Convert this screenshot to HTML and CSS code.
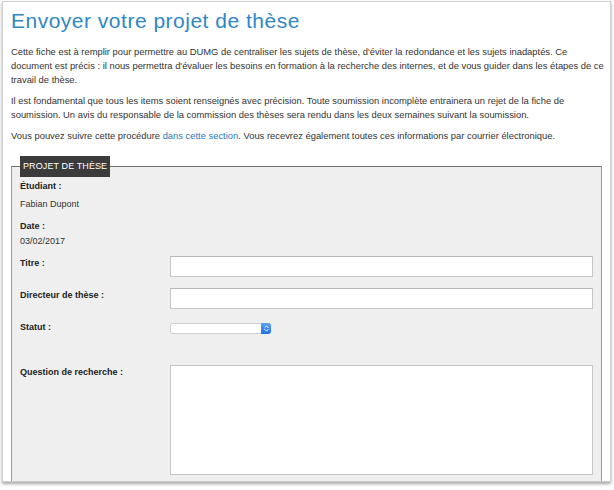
FILE: index.html
```html
<!DOCTYPE html>
<html lang="fr">
<head>
<meta charset="utf-8">
<title>Envoyer votre projet de thèse</title>
<link rel="stylesheet" href="styles.css">
</head>
<body>
<div class="window">
  <div class="page">
    <h1 class="title">Envoyer votre projet de thèse</h1>
    <div class="intro-block">
      <p class="intro">Cette fiche est à remplir pour permettre au DUMG de centraliser les sujets de thèse, d'éviter la redondance et les sujets inadaptés. Ce document est précis : il nous permettra d'évaluer les besoins en formation à la recherche des internes, et de vous guider dans les étapes de ce travail de thèse.</p>
      <p class="intro">Il est fondamental que tous les items soient renseignés avec précision. Toute soumission incomplète entrainera un rejet de la fiche de soumission. Un avis du responsable de la commission des thèses sera rendu dans les deux semaines suivant la soumission.</p>
      <p class="intro">Vous pouvez suivre cette procédure <a class="link" href="#">dans cette section</a>. Vous recevrez également toutes ces informations par courrier électronique.</p>
    </div>

    <fieldset class="box">
      <legend class="legend">PROJET DE THÈSE</legend>
      <div class="info">
        <div class="info-label">Étudiant :</div>
        <div class="info-value">Fabian Dupont</div>
      </div>
      <div class="info info-date">
        <div class="info-label">Date :</div>
        <div class="info-value info-value-tight">03/02/2017</div>
      </div>
      <div class="row">
        <label class="row-label">Titre :</label>
        <input class="text-input" type="text">
      </div>
      <div class="row">
        <label class="row-label">Directeur de thèse :</label>
        <input class="text-input" type="text">
      </div>
      <div class="row row-select">
        <label class="row-label">Statut :</label>
        <span class="select-wrap">
          <select class="select"><option></option></select>
          <span class="select-btn">
            <svg width="8" height="10" viewBox="0 0 8 10"><path d="M2 4 L4 2 L6 4 M2 6 L4 8 L6 6" fill="none" stroke="#fff" stroke-width="1.1" stroke-linecap="round" stroke-linejoin="round"/></svg>
          </span>
        </span>
      </div>
      <div class="row">
        <label class="row-label">Question de recherche :</label>
        <textarea class="textarea"></textarea>
      </div>
    </fieldset>
  </div>
</div>
</body>
</html>
```

FILE: styles.css
```css
html, body {
  margin: 0;
  padding: 0;
  background: #ffffff;
}

body {
  font-family: "Liberation Sans", Arial, Helvetica, sans-serif;
  width: 614px;
  height: 490px;
  overflow: hidden;
}

.window {
  margin: 1px 0 0 2px;
  width: 609px;
  height: 481px;
  border: 1px solid #cfcfcf;
  background: #ffffff;
  box-shadow: 0 2px 3px rgba(0, 0, 0, 0.35);
  overflow: hidden;
  box-sizing: border-box;
}

.page {
  padding: 6px 0 0 8px;
}

.title {
  margin: 0 0 11px 0;
  font-family: "Liberation Sans", Arial, sans-serif;
  font-weight: normal;
  font-size: 21px;
  line-height: 26px;
  color: #2f87c6;
  letter-spacing: 0.5px;
}

.intro-block {
  padding-right: 0;
}

.intro {
  margin: 0 0 7px 0;
  font-size: 9.4px;
  line-height: 14px;
  color: #333333;
}

.link {
  color: #2a79b6;
  text-decoration: none;
}

.box {
  margin: 13px 10px 0 0;
  padding: 2px 8px 8px 8px;
  border: 1px solid #9a9a9a;
  border-top-color: #6e6e6e;
  background: #efefef;
  min-height: 330px;
}

.legend {
  margin-left: 0;
  padding: 5px 3px 5px 3px;
  background: #3b3b3b;
  color: #ffffff;
  font-size: 9px;
  line-height: 11px;
  letter-spacing: 0.1px;
}

.info {
  font-size: 9px;
  line-height: 14px;
  color: #333333;
}

.info-label {
  font-weight: bold;
  color: #222222;
}

.info-value {
  margin-top: 4px;
}

.info-date {
  margin-top: 8px;
}

.info-value-tight {
  margin-top: 1px;
}

.row {
  display: flex;
  align-items: flex-start;
  margin-top: 8px;
}

.row + .row {
  margin-top: 11px;
}

.row-label {
  width: 150px;
  flex: 0 0 150px;
  font-size: 9px;
  font-weight: bold;
  line-height: 14px;
  color: #222222;
}

.text-input {
  width: 423px;
  height: 21px;
  margin: 0;
  padding: 2px 4px;
  box-sizing: border-box;
  border: 1px solid #c6c6c6;
  border-top-color: #b8b8b8;
  background: #ffffff;
  font-size: 9px;
  outline: none;
}

.row-select {
  height: 34px;
}

.select-wrap {
  position: relative;
  display: inline-block;
  margin-top: 3px;
  width: 101px;
  height: 11px;
}

.select {
  display: block;
  width: 101px;
  height: 11px;
  margin: 0;
  padding: 0;
  box-sizing: border-box;
  border: 1px solid #cfcfcf;
  border-radius: 3px;
  background: #ffffff;
  -webkit-appearance: none;
  appearance: none;
  font-size: 8px;
  outline: none;
}

.select-btn {
  position: absolute;
  right: 0;
  top: 0;
  width: 10px;
  height: 11px;
  border-radius: 0 3px 3px 0;
  background: linear-gradient(#5aa2fb, #1f6fe6);
  display: flex;
  align-items: center;
  justify-content: center;
}

.select-btn svg {
  width: 7px;
  height: 9px;
}

.textarea {
  width: 423px;
  height: 110px;
  margin: 0;
  padding: 2px;
  box-sizing: border-box;
  border: 1px solid #c6c6c6;
  background: #ffffff;
  resize: none;
  outline: none;
}
```
